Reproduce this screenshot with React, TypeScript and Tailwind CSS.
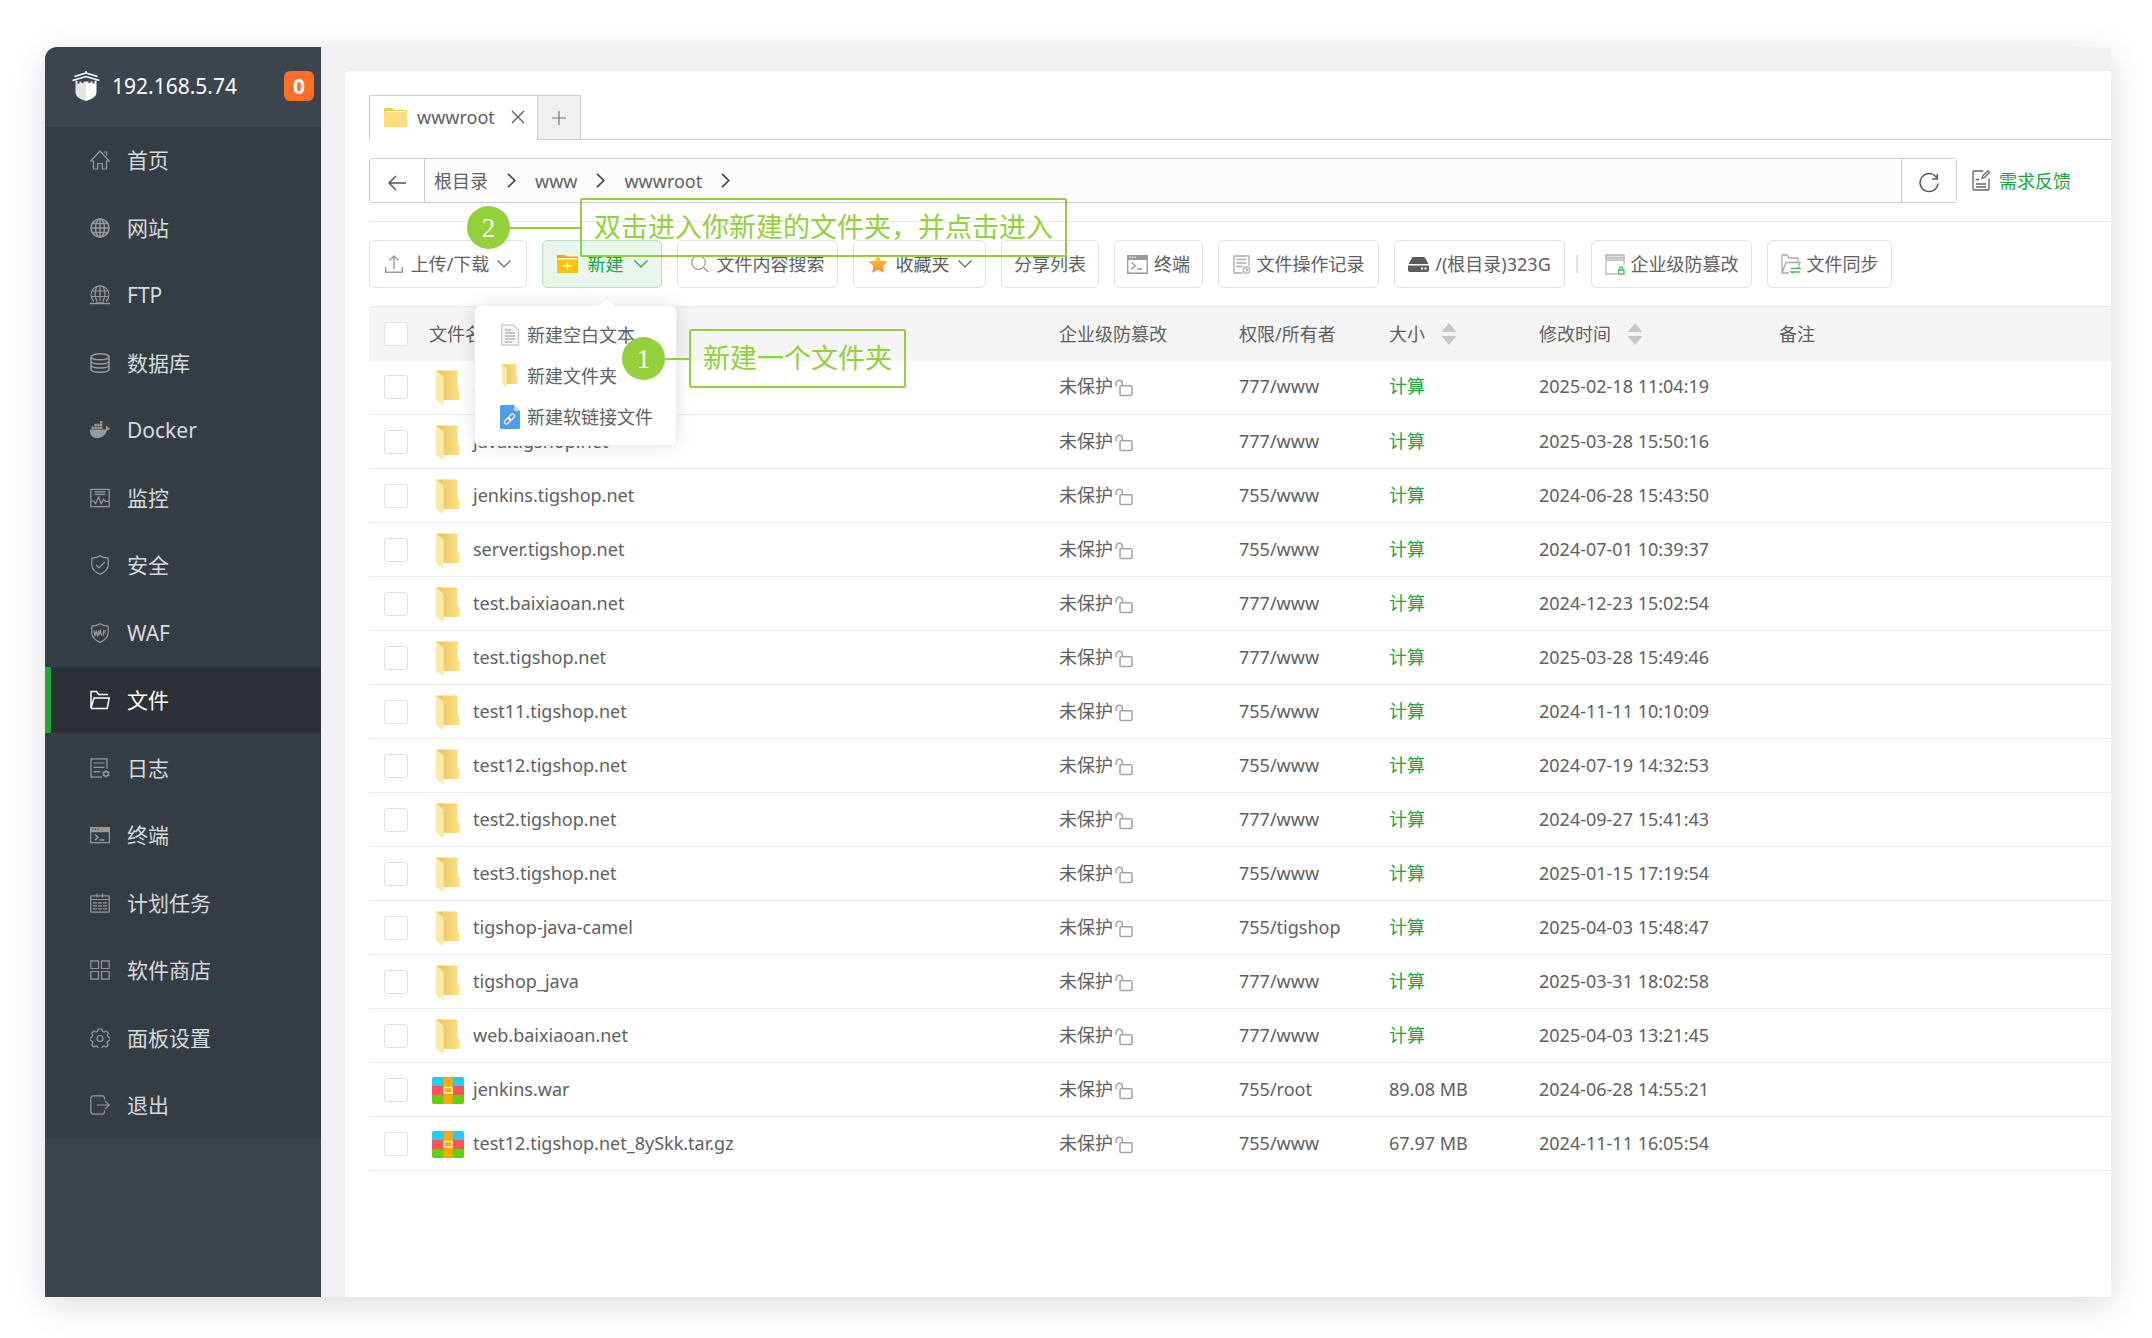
import React, { useState } from 'react';

const font = 'font-["Noto_Sans","Noto_Sans_CJK_SC",sans-serif]';

interface FileRow {
  name: string;
  owner: string;
  size?: string;
  time: string;
  archive?: boolean;
}

const files: FileRow[] = [
  { name: 'api', owner: '777/www', time: '2025-02-18 11:04:19' },
  { name: 'java.tigshop.net', owner: '777/www', time: '2025-03-28 15:50:16' },
  { name: 'jenkins.tigshop.net', owner: '755/www', time: '2024-06-28 15:43:50' },
  { name: 'server.tigshop.net', owner: '755/www', time: '2024-07-01 10:39:37' },
  { name: 'test.baixiaoan.net', owner: '777/www', time: '2024-12-23 15:02:54' },
  { name: 'test.tigshop.net', owner: '777/www', time: '2025-03-28 15:49:46' },
  { name: 'test11.tigshop.net', owner: '755/www', time: '2024-11-11 10:10:09' },
  { name: 'test12.tigshop.net', owner: '755/www', time: '2024-07-19 14:32:53' },
  { name: 'test2.tigshop.net', owner: '777/www', time: '2024-09-27 15:41:43' },
  { name: 'test3.tigshop.net', owner: '755/www', time: '2025-01-15 17:19:54' },
  { name: 'tigshop-java-camel', owner: '755/tigshop', time: '2025-04-03 15:48:47' },
  { name: 'tigshop_java', owner: '777/www', time: '2025-03-31 18:02:58' },
  { name: 'web.baixiaoan.net', owner: '777/www', time: '2025-04-03 13:21:45' },
  { name: 'jenkins.war', owner: '755/root', size: '89.08 MB', time: '2024-06-28 14:55:21', archive: true },
  { name: 'test12.tigshop.net_8ySkk.tar.gz', owner: '755/www', size: '67.97 MB', time: '2024-11-11 16:05:54', archive: true },
];

const LineIcon: React.FC<{ className?: string; children: React.ReactNode }> = ({ className = 'w-5 h-5', children }) => (
  <svg viewBox="0 0 20 20" fill="none" stroke="currentColor" strokeWidth="1.2" className={`shrink-0 ${className}`} aria-hidden="true">
    {children}
  </svg>
);

const terminalPaths = (
  <>
    <path d="M.6 2.6h18.8v15H.6z" />
    <path d="M.6 2.6h18.8v4H.6z" fill="currentColor" />
    <path d="M2.5 4.3h1.2M5 4.3h1.2M7.5 4.3h1.2" className="stroke-[#353d44]" />
    <path d="M5 9.5l3 2.8-3 2.8M9.5 15h5" strokeWidth="1.5" />
  </>
);

const shieldPath = 'M10 .8c2.500 1.700 5.300 2.200 8.200 2.300v6.400c0 4.700-3.200 7.700-8.200 9.900-5-2.200-8.200-5.200-8.200-9.900V3.100C4.700 3 7.500 2.500 10 .8z';

const menu: { label: string; icon: React.ReactNode }[] = [
  { label: '首页', icon: <path d="M.8 11L10 1l9.200 10h-2.700v8h-4.200v-5.500H7.700V19H3.500v-8zM13.500 2h3v3.500" /> },
  {
    label: '网站',
    icon: (
      <g strokeWidth="1.500">
        <circle cx="10" cy="10" r="9" />
        <ellipse cx="10" cy="10" rx="4.500" ry="9" />
        <path d="M10 1v18M1 10h18M2.500 5.500h15M2.500 14.500h15" />
      </g>
    ),
  },
  {
    label: 'FTP',
    icon: (
      <>
        <path d="M4 16.500A9 9 0 1 1 16 16.500M7 16.500c-2.500-5-2.500-10.500 0-15M13 16.500c2.500-5 2.500-10.500 0-15M10 1v15M1.500 11.500h17M2.500 6h15" />
        <path d="M0 18.500h20M6 18h8" strokeWidth="1.600" />
      </>
    ),
  },
  {
    label: '数据库',
    icon: (
      <g strokeWidth="1.500">
        <ellipse cx="10" cy="3.800" rx="9" ry="3" />
        <path d="M1 3.800v12.500c0 4 18 4 18 0V3.800M1 8c0 4 18 4 18 0M1 12c0 4 18 4 18 0" />
      </g>
    ),
  },
  {
    label: 'Docker',
    icon: (
      <path
        fill="currentColor"
        stroke="none"
        d="M0 9.500h15.500c.8-.8.600-2 0-3l.8-.9c1 .6 1.400 1.400 1.500 2.300.8-.1 1.600 0 2.200.4-.5 1.200-1.500 1.800-3 1.900C15.300 15.500 12 18 7 18c-5 0-7.300-3.500-7-8.500zM1.600 6.500h2.400v2.400H1.600zM4.400 6.500h2.400v2.400H4.400zM7.200 6.500h2.400v2.400H7.200zM10 6.500h2.400v2.400H10zM4.400 3.700h2.400v2.400H4.400zM7.200 3.700h2.400v2.400H7.200zM10 3.700h2.400v2.400H10zM10 .9h2.400v2.400H10z"
      />
    ),
  },
  { label: '监控', icon: <path d="M.8 1.300h18.400v17.400H.8zM4.500 3.800h11M4.500 6.300h11M1 13h2.800l1.800 2.800 3-7 2.600 7 2.400-4.500 2 2.200H19" /> },
  {
    label: '安全',
    icon: (
      <>
        <path d={shieldPath} />
        <path d="M6 9.800l3 3 5.800-5.800" />
      </>
    ),
  },
  {
    label: 'WAF',
    icon: (
      <>
        <path d={shieldPath} />
        <path d="M3.800 7.500l1.200 5 1.200-4 1.200 4 1.200-5M8.800 12.500l1.500-5 1.500 5M9.300 11h2M13.500 12.700V7.800h2.700M13.500 10h2.200" />
      </>
    ),
  },
  { label: '文件', icon: <path strokeWidth="1.500" d="M1 18.500V1.500h5.500l2.200 3H18M1 18.300L4 8h15.200l-2 10.500H1" /> },
  {
    label: '日志',
    icon: (
      <>
        <path d="M12 19.200H1V.8h16v10M3.500 5h11M3.500 9.300h11M3.500 13.700h7" />
        <circle cx="16" cy="15.800" r="2.400" strokeWidth="1.500" />
        <path d="M16 12v1.500M16 18v1.500M12.500 14l1.300.8M18.200 16.800l1.300.8M12.500 17.600l1.300-.8M18.200 14.800l1.300-.8" />
      </>
    ),
  },
  { label: '终端', icon: terminalPaths },
  {
    label: '计划任务',
    icon: (
      <>
        <path d="M.8 2.800h18.400v16.400H.8zM.8 6.500h18.400M7 .5v4M12.500 .5v4" />
        <path d="M3 9.800h14M3 12.800h14M3 15.800h14" strokeDasharray="4 1" />
      </>
    ),
  },
  { label: '软件商店', icon: <path d="M.8 .8h7.700v7.700H.8zM11.500 .8h7.700v7.700h-7.700zM.8 11.500h7.700v7.700H.8zM11.500 11.500h7.700v7.700h-7.700z" /> },
  {
    label: '面板设置',
    icon: (
      <>
        <path d="M8.200 1h3.600l.6 2.300 1.700.8 2.200-1.200 2 2.200-1 2.200.6 1.500 2 .8v2.700l-2.200.8-.6 1.700 1 2.200-2 2-2.200-1-1.600.7-.7 2.300H8.300l-.7-2.300-1.600-.7-2.200 1-2-2 1-2.200-.6-1.700L.2 12.300V9.600l2-.8.600-1.500-1-2.200 2-2.200L6 4.100l1.600-.8z" />
        <circle cx="10" cy="10.500" r="3" />
      </>
    ),
  },
  { label: '退出', icon: <path d="M14.500 4.500V2.500L13 .8H2.500L.8 2.500v15l1.700 1.700H13l1.500-1.700v-2M7 10h12M15 5.800l4.200 4.200-4.200 4.200" /> },
];

const Logo = () => (
  <svg viewBox="0 0 28 30" className="w-7 h-[30px] shrink-0" aria-hidden="true">
    <g fill="none" stroke="#fff" strokeWidth="1.500">
      <path d="M2.500 5.500L14 2l11.500 3.500M.5 9.500L14 5.500l13.500 4" />
      <path d="M14 0v3" />
    </g>
    <path d="M3.500 9l2 1v2.500h2v-2h2v1.500h2v-1.500H14V30C8 28 3.500 26 3.500 21z" fill="#e4e4e4" />
    <path d="M24.500 9l-2 1v2.500h-2v-2h-2v1.500h-2v-1.500H14V30c6-2 10.500-4 10.500-9z" fill="#fff" />
  </svg>
);

const FolderOpen: React.FC<{ className: string }> = ({ className }) => (
  <svg viewBox="0 0 24 36" className={`shrink-0 ${className}`} aria-hidden="true">
    <defs>
      <linearGradient id="folderBack" x1="0" x2="1">
        <stop offset="0.200" stopColor="#ebc866" />
        <stop offset="1" stopColor="#ffe083" />
      </linearGradient>
    </defs>
    <path d="M0 .5h21.500V19L23.500 21v9H4z" fill="url(#folderBack)" />
    <path d="M0 .5l7.500 6v29L0 30z" fill="#ffe9a6" />
  </svg>
);

const Archive = () => (
  <svg viewBox="0 0 32 27" className="w-8 h-[27px] shrink-0" aria-hidden="true">
    <path d="M0 9V2a2 2 0 0 1 2-2h28a2 2 0 0 1 2 2v7z" fill="#22ccf2" />
    <path d="M0 9h32v9H0z" fill="#ff5357" />
    <path d="M0 18h32v7a2 2 0 0 1-2 2H2a2 2 0 0 1-2-2z" fill="#60d303" />
    <path d="M11.500 0h9v27h-9z" fill="#ffaa00" />
    <path d="M12 10.500h8v5.500h-8z" fill="#ffaa00" stroke="#fff3c4" strokeWidth="1.500" />
  </svg>
);

const Chevron = () => (
  <svg viewBox="0 0 14 8" fill="none" stroke="currentColor" className="w-3.5 h-2 shrink-0" aria-hidden="true">
    <path d="M.5 .5L7 7l6.500-6.500" strokeWidth="1.200" />
  </svg>
);

const Crumb = () => (
  <svg viewBox="0 0 9 15" fill="none" stroke="#444" strokeWidth="1.700" className="w-[9px] h-[15px] shrink-0" aria-hidden="true">
    <path d="M1 .8l6.800 6.700L1 14.200" />
  </svg>
);

const Unlock = () => (
  <svg viewBox="0 0 18 18" fill="none" stroke="#a3a3a3" strokeWidth="1.500" className="w-[18px] h-[18px] mt-1 shrink-0" aria-hidden="true">
    <path d="M1 7V4.500a3.200 3.200 0 0 1 6.400 0V6.500" />
    <rect x="5" y="6.800" width="12" height="9.800" rx="1" />
  </svg>
);

const Sorter = () => (
  <svg viewBox="0 0 16 22" fill="#c8c8c8" className="w-4 h-[22px]" aria-hidden="true">
    <path d="M8 0l7.500 9H.5zM8 22l7.500-9H.5z" />
  </svg>
);

const Check: React.FC<{ label: string }> = ({ label }) => (
  <input
    type="checkbox"
    aria-label={label}
    className="block w-6 h-6 appearance-none rounded-[3px] border border-[#dcdfe6] bg-white checked:bg-[#20a53a]"
  />
);

const ToolButton: React.FC<{ className?: string; children: React.ReactNode }> = ({ className = 'px-3', children }) => (
  <button
    type="button"
    className={`flex items-center justify-center h-12 shrink-0 rounded-md border border-[#dcdfe6] bg-white whitespace-nowrap ${className}`}
  >
    {children}
  </button>
);

const Note: React.FC<{ step: number; line: string; place: string; children: React.ReactNode }> = ({ step, line, place, children }) => (
  <div className={`absolute z-20 flex items-center pointer-events-none text-[27px] text-[#92d13a] ${place}`}>
    <span className='flex items-center justify-center w-[43px] h-[43px] rounded-full bg-[#92d13a] text-white font-["Liberation_Serif",serif]'>
      {step}
    </span>
    <span className={`h-0.5 bg-[#92d13a] ${line}`} />
    <span className="flex items-center h-[59px] px-3 pb-0.5 rounded-xs border-2 border-[#92d13a] whitespace-nowrap">{children}</span>
  </div>
);

const NewMenu = () => (
  <div className="absolute z-10 top-[65px] -left-[68px] w-[203px] rounded-md border border-[#ebeef5] bg-white py-2 shadow-[0_0_18px_rgba(0,0,0,0.12)]">
    <span className="absolute -top-[7px] left-[126px] w-3 h-3 rotate-45 border-t border-l border-[#ebeef5] bg-white" />
    <button type="button" className="flex items-center w-full h-[41px] pl-[25px] gap-[7px] whitespace-nowrap">
      <svg viewBox="0 0 20 22" className="w-5 h-[22px]" fill="#f7f7f7" stroke="#cfcfcf" strokeWidth="1.500" aria-hidden="true">
        <path d="M1.500 1h12l5 5v15h-17z" />
        <path d="M5 6h6M5 9h10M5 12h10M5 15h10M5 18h7" stroke="#b5b5b5" />
      </svg>
      新建空白文本
    </button>
    <button type="button" className="flex items-center w-full h-[41px] pl-[25px] gap-[7px] whitespace-nowrap">
      <span className="flex justify-center w-5">
        <FolderOpen className="w-4 h-6" />
      </span>
      新建文件夹
    </button>
    <button type="button" className="flex items-center w-full h-[41px] pl-[25px] gap-[7px] whitespace-nowrap">
      <svg viewBox="0 0 20 24" className="w-5 h-6" aria-hidden="true">
        <path d="M1.500 0H14l6 6v16.500a1.500 1.500 0 0 1-1.500 1.500h-17A1.500 1.500 0 0 1 0 22.500v-21A1.500 1.500 0 0 1 1.500 0z" fill="#4d9df0" />
        <path d="M14 0l6 6h-6z" fill="#b8daff" />
        <g fill="none" stroke="#fff" strokeWidth="1.200">
          <rect x="4" y="14" width="7" height="4" rx="2" transform="rotate(-48 7.500 16)" />
          <rect x="8" y="10" width="7" height="4" rx="2" transform="rotate(-48 11.500 12)" />
        </g>
      </svg>
      新建软链接文件
    </button>
  </div>
);

const Sidebar: React.FC<{ active: string; onSelect: (label: string) => void }> = ({ active, onSelect }) => (
  <aside className="w-[276px] shrink-0 bg-[#3c444d] rounded-tl-xl text-[21px]">
    <div className="flex items-center h-20 pb-0.5 pl-[27px] pr-[7px] text-white">
      <Logo />
      <span className="ml-3">192.168.5.74</span>
      <span className="ml-auto flex items-center justify-center w-[30px] h-[30px] rounded-md bg-[#ff6d26] font-bold">0</span>
    </div>
    <nav className="flex flex-col justify-between h-[1011px] bg-[#353d44]">
      {menu.map((item) => (
        <a
          key={item.label}
          href="#"
          onClick={() => onSelect(item.label)}
          className={`flex items-center h-[66px] gap-[17px] border-l-6 pl-[39px] ${
            item.label === active ? 'border-[#20a53a] bg-[#2c3138] text-white' : 'border-transparent text-[#d8dadb]'
          }`}
        >
          <span className={item.label === active ? 'text-white' : 'text-[#999]'}>
            <LineIcon>{item.icon}</LineIcon>
          </span>
          <span>{item.label}</span>
        </a>
      ))}
    </nav>
  </aside>
);

const PathBar = () => (
  <div className="flex items-center mt-[18px]">
    <div className="flex flex-1 h-[45px] rounded-[3px] border border-[#ccc] bg-[#fcfcfc]">
      <button type="button" aria-label="返回" className="flex items-center justify-center w-[55px] border-r border-[#ccc] bg-white">
        <svg viewBox="0 0 18 16" fill="none" stroke="#555" strokeWidth="1.500" className="w-[18px] h-4 mt-1" aria-hidden="true">
          <path d="M8 1L1 8l7 7M1 8h17" />
        </svg>
      </button>
      <nav className="flex items-center flex-1 pl-[9px] gap-[19px]">
        <a href="#">根目录</a>
        <Crumb />
        <a href="#">www</a>
        <Crumb />
        <a href="#">wwwroot</a>
        <Crumb />
      </nav>
      <button type="button" aria-label="刷新" className="flex items-center justify-center w-[55px] border-l border-[#ccc] bg-white">
        <svg viewBox="0 0 20 20" fill="none" stroke="#555" strokeWidth="1.500" className="w-5 h-5 mt-1" aria-hidden="true">
          <path d="M17.500 4.500A9 9 0 1 0 19 10.500M18.300 1v5h-5" />
        </svg>
      </button>
    </div>
    <a href="#" className="flex items-center gap-[9px] ml-[15px] mr-10 text-[#20a53a]">
      <svg viewBox="0 0 18 21" fill="none" stroke="#666" strokeWidth="1.300" className="w-[18px] h-[21px]" aria-hidden="true">
        <path d="M11 1H2L1 2v17l1 1h14l1-1V8.500M4 14h10M4 17h10M3.500 9.500H7" />
        <path d="M10 8.500l1-3L16 .8 17.500 2.300 12.500 7.500z" />
      </svg>
      需求反馈
    </a>
  </div>
);

const Toolbar = () => {
  const [open, setOpen] = useState(true);

  return (
    <div className="flex items-center gap-[15px] mt-[18px] py-[18px] border-t border-[#ebebeb]">
      <ToolButton className="w-[158px] gap-2">
        <svg viewBox="0 0 18 18" fill="none" stroke="#999" strokeWidth="1.400" className="w-[18px] h-[18px]" aria-hidden="true">
          <path d="M.7 12v5.300h16.600V12M9 14V1M4.500 5.500L9 1l4.500 4.500" />
        </svg>
        上传/下载
        <Chevron />
      </ToolButton>

      {/* "New" drop-down */}
      <div className="relative">
        <button
          type="button"
          onClick={() => setOpen(!open)}
          className="flex items-center justify-center w-[120px] h-12 gap-2.5 rounded-md border border-[#b5e0bd] bg-[#e8f6eb] text-[#20a53a]"
        >
          <svg viewBox="0 0 21 18" className="w-[21px] h-[18px]" aria-hidden="true">
            <path d="M0 0h7.500l2 1.500H21V6H0z" fill="#ff9d00" />
            <path d="M1 3h19v3H1z" fill="#fff" />
            <path d="M0 4.500h21V18H0z" fill="#ffc400" />
            <path d="M10.500 7v8M6.500 11h8" stroke="#fff" strokeWidth="1.400" />
          </svg>
          新建
          <Chevron />
        </button>
        {open && <NewMenu />}
      </div>

      <ToolButton className="w-[161px] gap-2">
        <svg viewBox="0 0 18 18" fill="none" stroke="#999" strokeWidth="1.200" className="w-[18px] h-[18px]" aria-hidden="true">
          <circle cx="7.500" cy="7.500" r="6.800" />
          <path d="M12.500 12.500l5 4.500" />
        </svg>
        文件内容搜索
      </ToolButton>
      <ToolButton className="w-[133px] gap-2">
        <svg viewBox="0 0 20 20" className="w-5 h-5" aria-hidden="true">
          <defs>
            <linearGradient id="star" x1="0" y1="0" x2="0" y2="1">
              <stop offset="0.200" stopColor="#fcc53a" />
              <stop offset="1" stopColor="#f98a1c" />
            </linearGradient>
          </defs>
          <path d="M10 .5l2.900 6.100 6.700.9-4.900 4.600 1.200 6.700-5.900-3.200-5.900 3.200 1.200-6.700L.4 7.500l6.700-.9z" fill="url(#star)" />
        </svg>
        收藏夹
        <Chevron />
      </ToolButton>
      <ToolButton className="w-[98px]">分享列表</ToolButton>
      <ToolButton className="w-[89px] gap-1.5">
        <svg viewBox="0 0 21 19" fill="none" stroke="#999" strokeWidth="1.400" className="w-[21px] h-[19px]" aria-hidden="true">
          <path d="M.7 .7h19.600v17.600H.7z" />
          <path d="M.7 .7h19.600v3.500H.7z" fill="#999" />
          <path d="M2.500 2.300h1.200M5 2.300h1.200M7.500 2.300h1.200" stroke="#fff" />
          <path d="M4.500 7.500l3.800 3.300-3.800 3.300M10 14h5" />
        </svg>
        终端
      </ToolButton>
      <ToolButton className="w-[161px] gap-1.5">
        <svg viewBox="0 0 18 19" fill="none" stroke="#aaa" strokeWidth="1.300" className="w-[18px] h-[19px]" aria-hidden="true">
          <path d="M9.500 18H1V1h15v10M3.500 4.500h10M3.500 8h10M3.500 11.500h6" />
          <circle cx="13.500" cy="15" r="3.200" />
          <path d="M13.500 13.300V15h1.500" />
        </svg>
        文件操作记录
      </ToolButton>
      <ToolButton className="w-[171px] gap-1.5">
        <svg viewBox="0 0 21 15" className="w-[21px] h-[15px]" aria-hidden="true">
          <path d="M5.500 0h10c.8 0 1.300.3 1.700.9L20.500 7H.5L3.800 .9C4.200 .3 4.700 0 5.500 0zM0 8.500h21V13a2 2 0 0 1-2 2H2a2 2 0 0 1-2-2z" fill="#5c5c5c" />
          <path d="M13 10.500h2v2h-2zM16.500 10.500h2v2h-2z" fill="#fff" />
        </svg>
        /(根目录)323G
      </ToolButton>
      <span className="w-0.5 h-[18px] -ml-1 -mr-0.5 bg-[#dcdfe6]" />
      <ToolButton className="w-[161px] gap-1.5">
        <svg viewBox="0 0 20 21" fill="none" stroke="#bbb" strokeWidth="1.300" className="w-5 h-[21px]" aria-hidden="true">
          <path d="M12 20H1V1h18v10M1 6h18" />
          <path d="M1 1h18v3H1z" fill="#ddd" />
          <path d="M13.500 16h5.500v4h-5.500zM14.700 16v-1.500a1.500 1.500 0 0 1 3 0V16" stroke="#4db862" />
        </svg>
        企业级防篡改
      </ToolButton>
      <ToolButton className="w-[125px] gap-1.5">
        <svg viewBox="0 0 20 20" fill="none" stroke="#aaa" strokeWidth="1.300" className="w-5 h-5" aria-hidden="true">
          <path d="M8 19H1V1h5l2 3h9v3.500M1 19L5 8.500h14L18 12" />
          <path d="M10 14.500h9l-2-1.500M19 18h-9l2 1.500" stroke="#4db862" />
        </svg>
        文件同步
      </ToolButton>
    </div>
  );
};

const FileTable = () => (
  <table className="w-full table-fixed text-left">
    <colgroup>
      <col className="w-[45px]" />
      <col />
      <col className="w-[180px]" />
      <col className="w-[150px]" />
      <col className="w-[150px]" />
      <col className="w-[240px]" />
      <col className="w-[347px]" />
    </colgroup>
    <thead>
      <tr className="h-[54px] border-t border-[#ebebeb] bg-[#f5f5f5]">
        <th className="pl-[15px]">
          <Check label="全选" />
        </th>
        <th className="px-[15px] font-normal">文件名称</th>
        <th className="px-[15px] font-normal">企业级防篡改</th>
        <th className="px-[15px] font-normal">权限/所有者</th>
        <th className="px-[15px] font-normal">
          <span className="flex items-center gap-4">
            大小
            <Sorter />
          </span>
        </th>
        <th className="px-[15px] font-normal">
          <span className="flex items-center gap-4">
            修改时间
            <Sorter />
          </span>
        </th>
        <th className="px-[15px] font-normal">备注</th>
      </tr>
    </thead>
    <tbody>
      {files.map((file) => (
        <tr key={file.name} className="h-[54px] border-b border-[#ebeced]">
          <td className="pl-[15px]">
            <Check label={file.name} />
          </td>
          <td className="pl-[18px]">
            <span className="flex items-center gap-[9px]">
              <span className="flex justify-center w-8 pt-0.5">{file.archive ? <Archive /> : <FolderOpen className="w-6 h-9" />}</span>
              <a href="#" className="pb-0.5">{file.name}</a>
            </span>
          </td>
          <td className="pl-[15px] pb-0.5">
            <span className="flex items-center gap-0.5">
              未保护
              <Unlock />
            </span>
          </td>
          <td className="pl-[15px] pb-0.5">{file.owner}</td>
          <td className="pl-[15px] pb-0.5">{file.size ?? <a href="#" className="text-[#20a53a]">计算</a>}</td>
          <td className="pl-[15px] pb-0.5">{file.time}</td>
          <td />
        </tr>
      ))}
    </tbody>
  </table>
);

export default function App() {
  const [active, setActive] = useState('文件');

  return (
    <div className={`min-h-screen flex bg-white pt-[47px] pb-[41px] pl-[45px] pr-[41px] text-lg leading-6 text-[#606060] ${font}`}>
      <div className="relative flex flex-1 min-w-0 rounded-tl-xl bg-[#f1f1f1] shadow-[0_8px_36px_rgba(0,0,0,0.14)]">
        <Sidebar active={active} onSelect={setActive} />

        <main className="flex-1 min-w-0 mt-6 ml-6 rounded-tl-md bg-white pt-6 pl-6">
          {/* Tabs */}
          <div className="flex h-[45px]">
            <div className="flex items-center w-[168px] pl-3.5 pb-0.5 border-t border-l border-[#ccc]">
              <svg viewBox="0 0 23 19" className="w-[23px] h-[19px]" aria-hidden="true">
                <path d="M0 1a1 1 0 0 1 1-1h7l2 2h12a1 1 0 0 1 1 1v4H0z" fill="#fbc748" />
                <path d="M1.500 3h20v3h-20z" fill="#fff" />
                <path d="M0 5l2-1h20a1 1 0 0 1 1 1v13a1 1 0 0 1-1 1H1a1 1 0 0 1-1-1z" fill="#fedd7e" />
              </svg>
              <span className="ml-2.5">wwwroot</span>
              <button type="button" aria-label="关闭" className="ml-4">
                <svg viewBox="0 0 14 14" stroke="#555" strokeWidth="1.200" className="w-3.5 h-3.5" aria-hidden="true">
                  <path d="M1 1l12 12M13 1L1 13" />
                </svg>
              </button>
            </div>
            <button type="button" aria-label="新标签" className="flex items-center justify-center w-11 border border-[#ccc] bg-[#f0f0f0]">
              <svg viewBox="0 0 14 14" stroke="#777" strokeWidth="1.200" className="w-3.5 h-3.5" aria-hidden="true">
                <path d="M7 0v14M0 7h14" />
              </svg>
            </button>
            <div className="flex-1 border-b border-[#ccc]" />
          </div>

          <PathBar />
          <Toolbar />
          <FileTable />
        </main>

        <Note step={2} line="w-[70px]" place="top-[151px] left-[422px]">
          双击进入你新建的文件夹，并点击进入
        </Note>
        <Note step={1} line="w-6" place="top-[282px] left-[577px]">
          新建一个文件夹
        </Note>
      </div>
    </div>
  );
}
